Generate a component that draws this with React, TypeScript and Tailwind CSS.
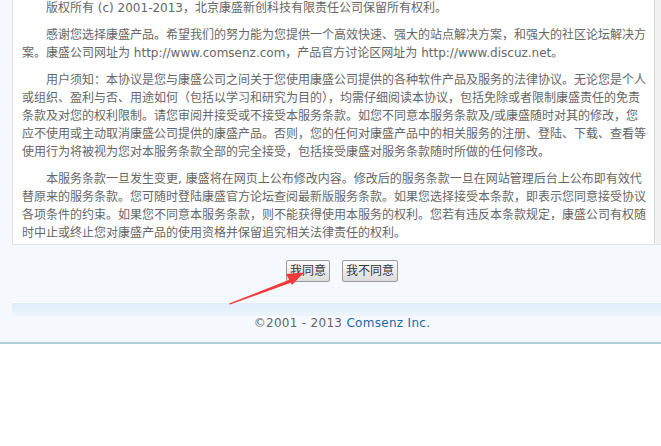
import React from "react";

const font = { fontFamily: '"DejaVu Sans", "Noto Sans CJK SC", sans-serif' };

const paragraphs: string[][] = [
  ["版权所有 (c) 2001-2013，北京康盛新创科技有限责任公司保留所有权利。"],
  [
    "感谢您选择康盛产品。希望我们的努力能为您提供一个高效快速、强大的站点解决方案，和强大的社区论坛解决方",
    "案。康盛公司网址为 http://www.comsenz.com，产品官方讨论区网址为 http://www.discuz.net。",
  ],
  [
    "用户须知：本协议是您与康盛公司之间关于您使用康盛公司提供的各种软件产品及服务的法律协议。无论您是个人",
    "或组织、盈利与否、用途如何（包括以学习和研究为目的），均需仔细阅读本协议，包括免除或者限制康盛责任的免责",
    "条款及对您的权利限制。请您审阅并接受或不接受本服务条款。如您不同意本服务条款及/或康盛随时对其的修改，您",
    "应不使用或主动取消康盛公司提供的康盛产品。否则，您的任何对康盛产品中的相关服务的注册、登陆、下载、查看等",
    "使用行为将被视为您对本服务条款全部的完全接受，包括接受康盛对服务条款随时所做的任何修改。",
  ],
  [
    "本服务条款一旦发生变更, 康盛将在网页上公布修改内容。修改后的服务条款一旦在网站管理后台上公布即有效代",
    "替原来的服务条款。您可随时登陆康盛官方论坛查阅最新版服务条款。如果您选择接受本条款，即表示您同意接受协议",
    "各项条件的约束。如果您不同意本服务条款，则不能获得使用本服务的权利。您若有违反本条款规定，康盛公司有权随",
    "时中止或终止您对康盛产品的使用资格并保留追究相关法律责任的权利。",
  ],
];

function LicenseBox() {
  return (
    <div className="flex h-[245px] border-x border-b border-[#e2e2e2] bg-white">
      <div className="flex-1 overflow-hidden pl-[9px]">
        <div className="-mt-[1px] flex flex-col gap-[9px] text-[12px] leading-[18px] text-[#666]">
          {paragraphs.map((lines, i) => (
            <p key={i} className="whitespace-nowrap indent-[24px]">
              {lines.map((l, j) => (
                <React.Fragment key={j}>
                  {j > 0 && <br />}
                  {l}
                </React.Fragment>
              ))}
            </p>
          ))}
        </div>
      </div>
      <div className="w-[17px] border-l border-[#dadada] bg-[#f1f1f1]" />
    </div>
  );
}

function Btn({ label, w }: { label: string; w: string }) {
  return (
    <button
      className={`${w} h-[22px] rounded-[2px] border border-[#9a9a9a] bg-gradient-to-b from-[#fbfbfb] to-[#dcdcdc] text-[12px] leading-[20px] text-[#333]`}
    >
      {label}
    </button>
  );
}

export default function App() {
  return (
    <div className="relative h-[446px] w-[661px] overflow-hidden bg-white" style={font}>
      <div className="h-[342px] bg-[#f5f9fd]">
        <div className="ml-3 w-[660px]">
          <LicenseBox />

          <div className="mt-[15px] flex justify-center gap-3">
            <Btn label="我同意" w="w-[44px]" />
            <Btn label="我不同意" w="w-[56px]" />
          </div>

          <div className="mt-[20px] h-px bg-white" />
          <div className="h-[13px] bg-gradient-to-b from-[#e0eef9] to-[#edf5fc]" />
          <p className="text-center text-[12px] leading-[14px] tracking-[0.3px] text-[#666]">
            ©2001 - 2013 <span className="text-[#2366a8]">Comsenz Inc.</span>
          </p>
        </div>
      </div>
      <div className="h-[2px] bg-[#afcfdb]" />

      {/* red arrow pointing at the agree button */}
      <svg className="pointer-events-none absolute left-0 top-0" width="661" height="446">
        <polygon points="229,303.5 290,279.5 291.5,282.5 230,304.5" fill="#f03a3a" />
        <polygon points="304,272.5 286,274 292,285" fill="#f03a3a" />
      </svg>
    </div>
  );
}
